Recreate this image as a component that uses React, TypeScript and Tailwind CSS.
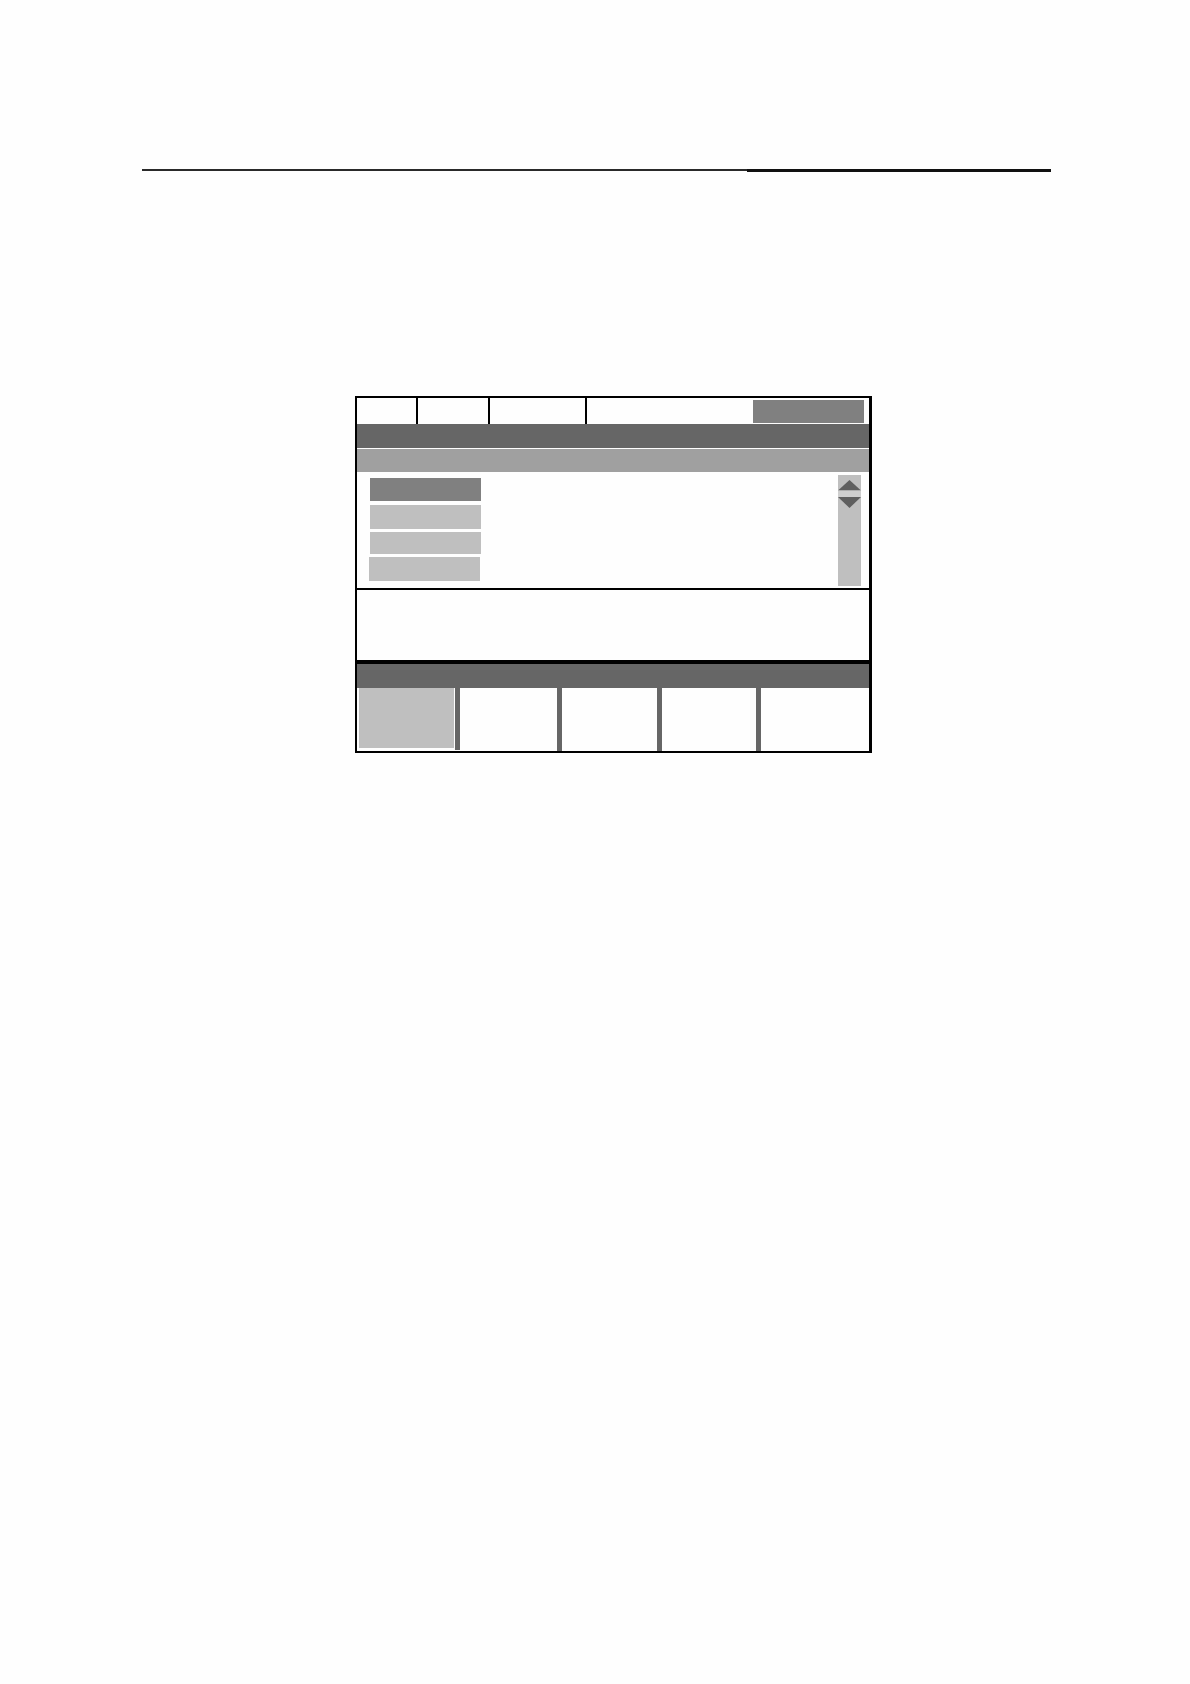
import React from "react";

function ScrollArrows() {
  return (
    <svg width="23" height="30" viewBox="0 0 23 30" className="block">
      <polygon points="11.5,0 23,10.5 0,10.5" fill="#5f5f5f" />
      <rect x="0" y="10.5" width="23" height="6.5" fill="#cfcfcf" />
      <polygon points="0,17 23,17 11.5,28" fill="#5f5f5f" />
    </svg>
  );
}

function TabRow() {
  return (
    <div className="flex h-[26px]">
      <div className="w-[59px]" />
      <div className="w-[2px] bg-black" />
      <div className="w-[70px]" />
      <div className="w-[2px] bg-black" />
      <div className="w-[95px]" />
      <div className="w-[2px] bg-black" />
      <div className="flex flex-1 justify-end pt-[2px] pr-[5px]">
        <div className="h-[23px] w-[111px] bg-[#808080]" />
      </div>
    </div>
  );
}

function ListArea() {
  return (
    <div className="flex h-[116px] justify-between">
      <div className="flex flex-col pl-[13px] pt-[6px]">
        <div className="h-[23px] w-[111px] bg-[#808080]" />
        <div className="mt-[4px] h-[24px] w-[111px] bg-[#bfbfbf]" />
        <div className="mt-[3px] h-[22px] w-[111px] bg-[#bfbfbf]" />
        <div className="ml-[-1px] mt-[3px] h-[24px] w-[111px] bg-[#bfbfbf]" />
      </div>
      <div className="mr-[8px] mt-[3px] mb-[2px] w-[23px] bg-[#bfbfbf] pt-[5px]">
        <ScrollArrows />
      </div>
    </div>
  );
}

function SoftKeys() {
  return (
    <div className="flex h-[63px]">
      <div className="w-[98px] pl-[2px] pr-[1px] pb-[3px]">
        <div className="h-full w-full bg-[#bfbfbf]" />
      </div>
      <div className="mb-[1px] w-[5px] bg-[#666666]" />
      <div className="w-[97px]" />
      <div className="w-[5px] bg-[#666666]" />
      <div className="w-[95px]" />
      <div className="w-[5px] bg-[#666666]" />
      <div className="w-[94px]" />
      <div className="w-[5px] bg-[#666666]" />
      <div className="flex-1" />
    </div>
  );
}

export default function App() {
  return (
    <div className="min-h-[1684px] w-[1190px] bg-[#fefefe]">
      <div className="ml-[142px] flex w-[909px] pt-[169px]">
        <div className="h-[2px] w-[605px] bg-[#2a2a2a]" />
        <div className="h-[2.5px] flex-1 bg-[#111111]" />
      </div>

      <div className="ml-[355px] mt-[224px] flex h-[357px] w-[517px] flex-col border-y-2 border-l-2 border-r-[3px] border-black">
        <TabRow />
        <div className="h-[24px] bg-[#666666]" />
        <div className="mt-[1px] h-[23px] bg-[#a0a0a0]" />
        <ListArea />
        <div className="h-[2px] bg-black" />
        <div className="h-[70px]" />
        <div className="h-[4px] bg-black" />
        <div className="h-[24px] bg-[#666666]" />
        <SoftKeys />
      </div>
    </div>
  );
}
